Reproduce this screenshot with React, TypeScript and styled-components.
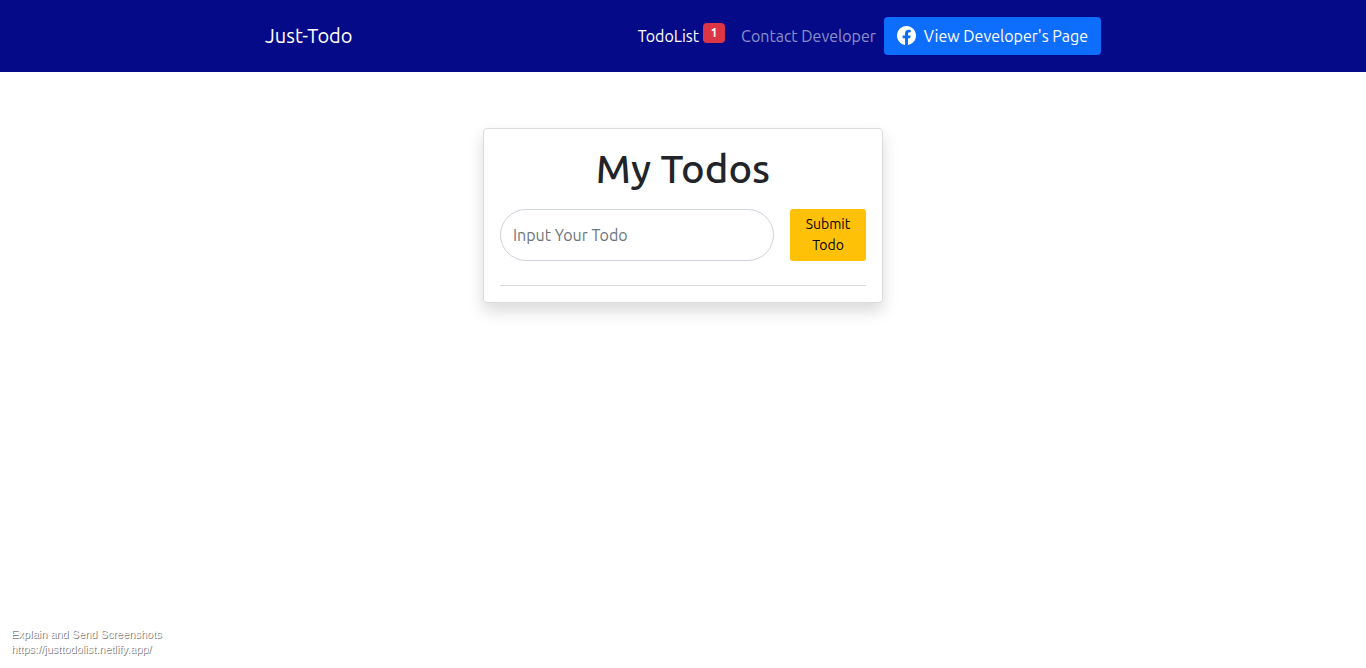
import React from "react";
import styled, { createGlobalStyle } from "styled-components";

const GlobalStyle = createGlobalStyle`
  *, *::before, *::after { box-sizing: border-box; }
  body {
    margin: 0;
    background: #fff;
    color: #212529;
    font: 400 16px/24px Ubuntu, "Noto Sans", sans-serif;
  }
  button, input { font: inherit; }
`;

const Page = styled.div`
  min-height: 100vh;
  display: flex;
  flex-direction: column;
`;

const Navbar = styled.nav`
  background: #050b88;
  padding: 17px 12px;
`;

const NavInner = styled.div`
  max-width: 836px;
  margin: 0 auto;
  display: flex;
  flex-wrap: wrap;
  align-items: center;
  justify-content: space-between;
`;

const Brand = styled.a`
  color: #fff;
  font-size: 20px;
  line-height: 30px;
  text-decoration: none;
`;

const NavItems = styled.div`
  display: flex;
  flex-wrap: wrap;
  align-items: center;
`;

const NavLink = styled.a<{ $active?: boolean }>`
  display: flex;
  gap: 4px;
  padding: 7px 8px;
  color: ${(p) => (p.$active ? "#fff" : "rgba(255, 255, 255, 0.55)")};
  text-decoration: none;
`;

const Badge = styled.span`
  align-self: flex-start;
  min-width: 22px;
  margin-top: -1px;
  padding: 0 7px;
  border-radius: 4px;
  background: #dc3545;
  color: #fff;
  font-size: 12px;
  font-weight: 700;
  line-height: 20px;
  text-align: center;
`;

const ProfileButton = styled.button`
  display: flex;
  align-items: center;
  gap: 8px;
  height: 38px;
  padding: 0 13px;
  border: 0;
  border-radius: 4px;
  background: #0d6efd;
  color: #fff;
  cursor: pointer;
`;

const Main = styled.main`
  flex: 1;
  padding: 56px 12px;
`;

const Card = styled.section`
  max-width: 400px;
  margin: 0 auto;
  padding: 16px;
  border: 1px solid #dcdcdc;
  border-radius: 4px;
  background: #fff;
  box-shadow: 0 8px 16px rgba(0, 0, 0, 0.15);
`;

const Title = styled.h1`
  margin: 0 0 16px;
  font-size: 40px;
  font-weight: 500;
  line-height: 48px;
  text-align: center;
`;

const TodoForm = styled.form`
  display: flex;
  gap: 16px;
  padding-bottom: 24px;
  border-bottom: 1px solid #d9dadb;
`;

const TodoInput = styled.input`
  flex: 1;
  min-width: 0;
  height: 52px;
  padding: 0 12px;
  border: 1px solid #ced4da;
  border-radius: 26px;
  background: #fff;
  color: #212529;
  &::placeholder { color: #6c757d; opacity: 1; }
`;

const SubmitButton = styled.button`
  width: 76px;
  padding: 5px 8px;
  border: 0;
  border-radius: 3px;
  background: #ffc107;
  color: #000;
  font-size: 14px;
  line-height: 21px;
  cursor: pointer;
`;

const Caption = styled.footer`
  padding: 0 11px 11px;
  color: #fff;
  font: 11px/15px "Liberation Sans", Arial, sans-serif;
  text-shadow: 1px 1px 0 #808080;
`;

const Icon = styled.svg`
  display: block;
  width: 19px;
  height: 20px;
  padding-bottom: 1px;
`;

const FacebookIcon = () => (
  <Icon viewBox="0 0 16 16" fill="currentColor" aria-hidden="true">
    <path d="M16 8.049c0-4.446-3.582-8.05-8-8.05C3.58 0-.002 3.603-.002 8.05c0 4.017 2.926 7.347 6.75 7.951v-5.625h-2.03V8.05H6.75V6.275c0-2.017 1.195-3.131 3.022-3.131.876 0 1.791.157 1.791.157v1.98h-1.009c-.993 0-1.303.621-1.303 1.258v1.51h2.218l-.354 2.326H9.25V16c3.824-.604 6.75-3.934 6.75-7.951z" />
  </Icon>
);

export default function App() {
  return (
    <Page>
      <GlobalStyle />
      <Navbar>
        <NavInner>
          <Brand href="#">Just-Todo</Brand>
          <NavItems>
            <NavLink href="#todos" $active>
              TodoList <Badge>1</Badge>
            </NavLink>
            <NavLink href="#contact">Contact Developer</NavLink>
            <ProfileButton type="button">
              <FacebookIcon />
              View Developer's Page
            </ProfileButton>
          </NavItems>
        </NavInner>
      </Navbar>
      <Main>
        <Card id="todos">
          <Title>My Todos</Title>
          <TodoForm onSubmit={(e) => e.preventDefault()}>
            <TodoInput type="text" aria-label="Input Your Todo" placeholder="Input Your Todo" />
            <SubmitButton type="submit">Submit Todo</SubmitButton>
          </TodoForm>
        </Card>
      </Main>
      <Caption>
        <div>Explain and Send Screenshots</div>
        <div>https://justtodolist.netlify.app/</div>
      </Caption>
    </Page>
  );
}
